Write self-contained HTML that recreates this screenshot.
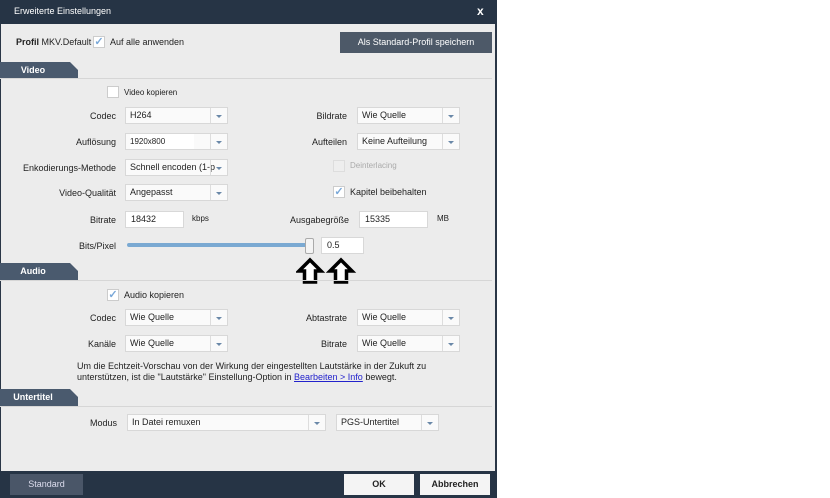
<!DOCTYPE html><html><head><style>
body{margin:0;width:830px;height:498px;background:#fff;font-family:"Liberation Sans",sans-serif;font-size:9px;color:#222;position:relative;overflow:hidden}
.a{position:absolute}
.dlg{left:0;top:0;width:497px;height:498px;background:#ececec;border-left:1px solid #2a3646;border-right:2px solid #2a3646;box-sizing:border-box}
.title{left:0;top:0;width:497px;height:24px;background:#263445;color:#fff;font-size:9px}
.lbl{text-align:right;width:120px;line-height:12px}
.sel{height:17px;background:#fafafa;border:1px solid #d8d8d8;box-sizing:border-box;line-height:15px;padding-left:4px;font-size:9px}
.sel:after{content:"";position:absolute;right:0;top:0;width:16px;height:15px;border-left:1px solid #ddd}
.sel b{position:absolute;right:5px;top:7px;width:0;height:0;border-left:3px solid transparent;border-right:3px solid transparent;border-top:3px solid #6a88a8}
.inp{height:17px;background:#fff;border:1px solid #d8d8d8;box-sizing:border-box;line-height:15px;padding-left:5px}
.tab{left:0;height:17px;width:78px;background:#4a5a6e;color:#fff;font-weight:bold;line-height:17px;clip-path:polygon(0 0,70px 0,78px 8px,78px 17px,0 17px)}
.tab span{position:absolute;left:0;width:66px;text-align:center}
.hl{left:0;width:492px;height:1px;background:#d6d6d6}
.cb{width:12px;height:12px;background:#fff;border:1px solid #ccc;box-sizing:border-box;color:#7aa8d8;font-size:11px;font-weight:bold;line-height:11px;text-align:center}
.btn{background:#475566;color:#fff;text-align:center;box-sizing:border-box}
</style></head><body>
<div class="a dlg"></div>
<div class="a title"><span class="a" style="left:14px;top:6px">Erweiterte Einstellungen</span><span class="a" style="left:477px;top:4px;font-weight:bold;font-size:12px">x</span></div>
<div class="a" style="left:16px;top:37px"><b>Profil</b> MKV.Default</div>
<div class="a cb" style="left:93px;top:36px">✓</div>
<div class="a" style="left:110px;top:37px">Auf alle anwenden</div>
<div class="a btn" style="left:340px;top:32px;width:152px;height:21px;line-height:21px;background:#4d5968">Als Standard-Profil speichern</div>

<div class="a tab" style="top:62px"><span>Video</span></div>
<div class="a hl" style="top:78px"></div>
<div class="a cb" style="left:107px;top:86px"></div>
<div class="a" style="left:124px;top:88px;font-size:8px">Video kopieren</div>

<div class="a lbl" style="left:-4px;top:110px">Codec</div>
<div class="a sel" style="left:125px;top:107px;width:103px">H264<b></b></div>
<div class="a lbl" style="left:227px;top:110px">Bildrate</div>
<div class="a sel" style="left:357px;top:107px;width:103px">Wie Quelle<b></b></div>

<div class="a lbl" style="left:-4px;top:136px">Auflösung</div>
<div class="a sel" style="left:125px;top:133px;width:103px"><span style="background:#fff;display:inline-block;width:64px;font-size:8px">1920x800</span><b></b></div>
<div class="a lbl" style="left:227px;top:136px">Aufteilen</div>
<div class="a sel" style="left:357px;top:133px;width:103px">Keine Aufteilung<b></b></div>

<div class="a lbl" style="left:-4px;top:162px">Enkodierungs-Methode</div>
<div class="a sel" style="left:125px;top:159px;width:103px;overflow:hidden;white-space:nowrap">Schnell encoden (1-p<b></b></div>
<div class="a cb" style="left:333px;top:160px;border-color:#ddd;background:#eee"></div>
<div class="a" style="left:350px;top:161px;color:#aaa;font-size:8px">Deinterlacing</div>

<div class="a lbl" style="left:-4px;top:187px">Video-Qualität</div>
<div class="a sel" style="left:125px;top:184px;width:103px">Angepasst<b></b></div>
<div class="a cb" style="left:333px;top:186px">✓</div>
<div class="a" style="left:350px;top:187px">Kapitel beibehalten</div>

<div class="a lbl" style="left:-4px;top:214px">Bitrate</div>
<div class="a inp" style="left:125px;top:211px;width:59px">18432</div>
<div class="a" style="left:192px;top:214px;font-size:8px">kbps</div>
<div class="a lbl" style="left:229px;top:214px">Ausgabegröße</div>
<div class="a inp" style="left:359px;top:211px;width:69px">15335</div>
<div class="a" style="left:437px;top:214px;font-size:8px">MB</div>

<div class="a lbl" style="left:-4px;top:240px">Bits/Pixel</div>
<div class="a" style="left:127px;top:243px;width:183px;height:4px;background:#7aa9d2;border-radius:2px"></div>
<div class="a" style="left:305px;top:238px;width:7px;height:14px;background:#f4f4f4;border:1px solid #aaa;border-radius:2px"></div>
<div class="a inp" style="left:321px;top:237px;width:43px">0.5</div>
<svg class="a" style="left:296px;top:257px" width="62" height="28"><path d="M14 3 L25 14 L19.5 14 L19.5 25 L8.5 25 L8.5 14 L3 14 Z" fill="#fff" stroke="#000" stroke-width="3.5"/><path d="M45 3 L56 14 L50.5 14 L50.5 25 L39.5 25 L39.5 14 L34 14 Z" fill="#fff" stroke="#000" stroke-width="3.5"/></svg>

<div class="a tab" style="top:263px"><span>Audio</span></div>
<div class="a hl" style="top:280px"></div>
<div class="a cb" style="left:107px;top:289px">✓</div>
<div class="a" style="left:124px;top:290px">Audio kopieren</div>
<div class="a lbl" style="left:-4px;top:312px">Codec</div>
<div class="a sel" style="left:125px;top:309px;width:103px">Wie Quelle<b></b></div>
<div class="a lbl" style="left:227px;top:312px">Abtastrate</div>
<div class="a sel" style="left:357px;top:309px;width:103px">Wie Quelle<b></b></div>
<div class="a lbl" style="left:-4px;top:338px">Kanäle</div>
<div class="a sel" style="left:125px;top:335px;width:103px">Wie Quelle<b></b></div>
<div class="a lbl" style="left:227px;top:338px">Bitrate</div>
<div class="a sel" style="left:357px;top:335px;width:103px">Wie Quelle<b></b></div>
<div class="a" style="left:77px;top:361px;line-height:11px;width:360px">Um die Echtzeit-Vorschau von der Wirkung der eingestellten Lautstärke in der Zukuft zu<br>unterstützen, ist die "Lautstärke" Einstellung-Option in <u style="color:#22c">Bearbeiten &gt; Info</u> bewegt.</div>

<div class="a tab" style="top:389px"><span>Untertitel</span></div>
<div class="a hl" style="top:406px"></div>
<div class="a lbl" style="left:-3px;top:417px">Modus</div>
<div class="a sel" style="left:127px;top:414px;width:199px">In Datei remuxen<b></b></div>
<div class="a sel" style="left:336px;top:414px;width:103px">PGS-Untertitel<b></b></div>

<div class="a" style="left:0;top:471px;width:497px;height:27px;background:#263445"></div>
<div class="a btn" style="left:10px;top:474px;width:73px;height:21px;line-height:21px;background:#4a5668;color:#dde">Standard</div>
<div class="a btn" style="left:344px;top:474px;width:70px;height:21px;line-height:21px;background:#f4f4f4;color:#222;font-weight:bold">OK</div>
<div class="a btn" style="left:420px;top:474px;width:70px;height:21px;line-height:21px;background:#f4f4f4;color:#222;font-weight:bold">Abbrechen</div>
</body></html>
